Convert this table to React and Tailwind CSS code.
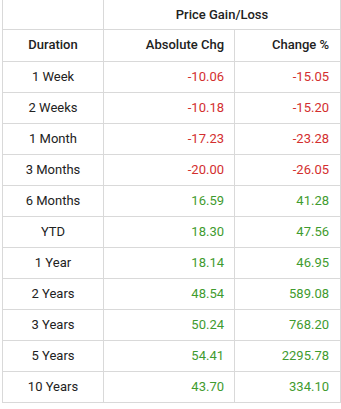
const rows = [
  { d: '1 Week', abs: '-10.06', pct: '-15.05' },
  { d: '2 Weeks', abs: '-10.18', pct: '-15.20' },
  { d: '1 Month', abs: '-17.23', pct: '-23.28' },
  { d: '3 Months', abs: '-20.00', pct: '-26.05' },
  { d: '6 Months', abs: '16.59', pct: '41.28' },
  { d: 'YTD', abs: '18.30', pct: '47.56' },
  { d: '1 Year', abs: '18.14', pct: '46.95' },
  { d: '2 Years', abs: '48.54', pct: '589.08' },
  { d: '3 Years', abs: '50.24', pct: '768.20' },
  { d: '5 Years', abs: '54.41', pct: '2295.78' },
  { d: '10 Years', abs: '43.70', pct: '334.10' },
];

export default function App() {
  return (
    <div className="bg-white w-[341px] h-[409px] pl-[2px] font-['Roboto',sans-serif] text-[13px] text-[#222]">
      <table className="w-[338px] border-collapse table-fixed">
        <colgroup>
          <col className="w-[101px]" />
          <col className="w-[131px]" />
          <col className="w-[106px]" />
        </colgroup>
        <thead>
          <tr className="h-[29px]">
            <th className="border border-t-0 border-[#d9d9d9]" />
            <th colSpan={2} className="border border-t-0 border-[#d9d9d9] font-medium text-center">
              Price Gain/Loss
            </th>
          </tr>
          <tr className="h-[32px]">
            <th className="border border-[#d9d9d9] font-medium text-center">Duration</th>
            <th className="border border-[#d9d9d9] font-medium text-right pr-[10px]">Absolute Chg</th>
            <th className="border border-[#d9d9d9] font-medium text-right pr-[11px]">Change %</th>
          </tr>
        </thead>
        <tbody>
          {rows.map((r) => {
            const neg = r.abs.startsWith('-');
            const color = neg ? 'text-[#d32f2f]' : 'text-[#3f9b2f]';
            return (
              <tr key={r.d} className="h-[31px]">
                <td className="border border-[#d9d9d9] text-center">{r.d}</td>
                <td className={`border border-[#d9d9d9] text-right pr-[10px] ${color}`}>{r.abs}</td>
                <td className={`border border-[#d9d9d9] text-right pr-[11px] ${color}`}>{r.pct}</td>
              </tr>
            );
          })}
        </tbody>
      </table>
    </div>
  );
}
